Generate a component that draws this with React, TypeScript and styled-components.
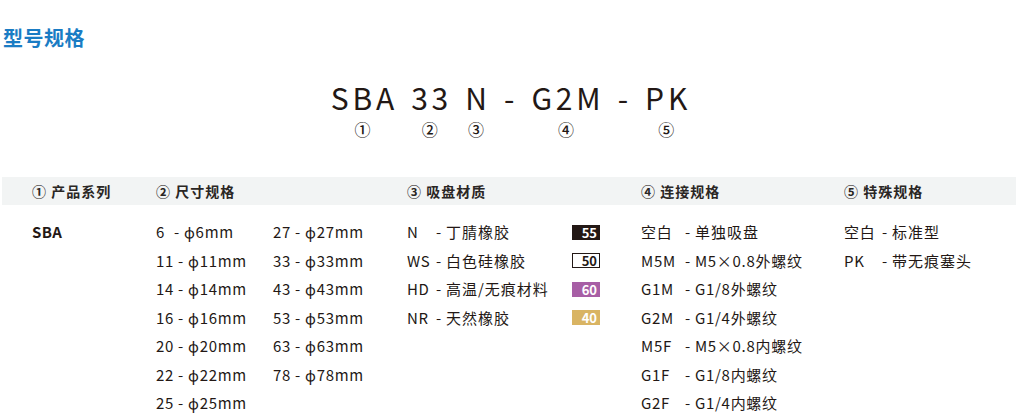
import React from 'react'
import styled, { createGlobalStyle } from 'styled-components'

const GlobalStyle = createGlobalStyle`
  body {
    margin: 0;
    background: #ffffff;
    font-family: 'Noto Sans CJK SC', 'Noto Sans', sans-serif;
    color: #231815;
  }
`

const Page = styled.div`
  width: 1017px;
  padding-top: 24px;
`

const Title = styled.h2`
  margin: 0 0 0 3px;
  font-size: 20px;
  line-height: 28px;
  font-weight: 700;
  color: #1a7cc4;
  letter-spacing: 0.5px;
`

const Model = styled.div`
  display: flex;
  justify-content: center;
  gap: 17px;
  margin-top: 28px;
  padding-left: 1px;
`

const Segment = styled.div`
  display: flex;
  flex-direction: column;
  align-items: center;
`

const Part = styled.span`
  font-size: 30px;
  line-height: 34px;
  letter-spacing: 3.8px;
  margin-right: -3.8px;
  color: #231815;
`

const Mark = styled.span`
  margin-top: 6px;
  font-size: 16px;
  line-height: 19px;
  height: 19px;
  font-weight: 500;
`

const Columns = styled.div`
  display: grid;
  grid-template-columns: 124px 251px 234px 203px 1fr;
  padding-left: 30px;
`

const Band = styled(Columns)`
  margin: 38px 1px 0 2px;
  height: 28px;
  align-items: center;
  background: #f2f4f4;
`

const Head = styled.div`
  font-size: 14px;
  font-weight: 700;
  letter-spacing: 1px;
  color: #2a2624;
  white-space: nowrap;
`

const Body = styled(Columns)`
  margin-left: 2px;
  padding-top: 13px;
`

const List = styled.div`
  display: flex;
  flex-direction: column;
`

const SizeGrid = styled.div`
  display: grid;
  grid-template-columns: 117px 117px;
  grid-auto-flow: column;
  grid-template-rows: repeat(7, 28.5px);
`

const Row = styled.div`
  height: 28.5px;
  line-height: 28.5px;
  font-size: 15px;
  letter-spacing: 0.7px;
  white-space: pre;
`

const MaterialRow = styled(Row)`
  display: flex;
  align-items: center;
  justify-content: space-between;
  width: 193px;
`

const Series = styled(Row)`
  font-weight: 700;
  letter-spacing: 0.3px;
`

const Code = styled.span<{ $w?: number }>`
  display: inline-block;
  ${p => (p.$w ? `width: ${p.$w}px;` : '')}
`

const Desc = styled.span`
  letter-spacing: 1px;
`

const badgeColors: Record<string, { bg: string; fg: string; line: string }> = {
  '55': { bg: '#231815', fg: '#ffffff', line: '#231815' },
  '50': { bg: '#ffffff', fg: '#231815', line: '#231815' },
  '60': { bg: '#a75ea5', fg: '#ffffff', line: '#a75ea5' },
  '40': { bg: '#d9b463', fg: '#ffffff', line: '#d9b463' }
}

const Badge = styled.span<{ $v: string }>`
  box-sizing: border-box;
  width: 28px;
  height: 15px;
  padding-right: 2px;
  text-align: right;
  font-size: 13px;
  line-height: 13px;
  font-weight: 700;
  letter-spacing: 0;
  background: ${p => badgeColors[p.$v].bg};
  color: ${p => badgeColors[p.$v].fg};
  border: 1px solid ${p => badgeColors[p.$v].line};
`

const model = [
  { t: 'SBA', m: '①' },
  { t: '33', m: '②' },
  { t: 'N', m: '③' },
  { t: '-', m: '' },
  { t: 'G2M', m: '④' },
  { t: '-', m: '' },
  { t: 'PK', m: '⑤' }
]

const sizes = ['6', '11', '14', '16', '20', '22', '25', '27', '33', '43', '53', '63', '78']

const materials = [
  { c: 'N', d: '丁腈橡胶', b: '55' },
  { c: 'WS', d: '白色硅橡胶', b: '50' },
  { c: 'HD', d: '高温/无痕材料', b: '60' },
  { c: 'NR', d: '天然橡胶', b: '40' }
]

const ports = [
  ['空白', '单独吸盘'],
  ['M5M', 'M5×0.8外螺纹'],
  ['G1M', 'G1/8外螺纹'],
  ['G2M', 'G1/4外螺纹'],
  ['M5F', 'M5×0.8内螺纹'],
  ['G1F', 'G1/8内螺纹'],
  ['G2F', 'G1/4内螺纹']
]

const specials = [
  ['空白', '标准型'],
  ['PK', '带无痕塞头']
]

const App: React.FC = () => {
  return (
    <Page>
      <GlobalStyle />
      <Title>型号规格</Title>
      <Model>
        {model.map((s, i) => (
          <Segment key={i}>
            <Part>{s.t}</Part>
            <Mark>{s.m}</Mark>
          </Segment>
        ))}
      </Model>
      <Band>
        <Head>① 产品系列</Head>
        <Head>② 尺寸规格</Head>
        <Head>③ 吸盘材质</Head>
        <Head>④ 连接规格</Head>
        <Head>⑤ 特殊规格</Head>
      </Band>
      <Body>
        <List>
          <Series>SBA</Series>
        </List>
        <SizeGrid>
          {sizes.map(c => (
            <Row key={c}>
              <Code $w={c.length === 1 ? 14 : undefined}>{c}</Code>
              {' - ϕ' + c + 'mm'}
            </Row>
          ))}
        </SizeGrid>
        <List>
          {materials.map(m => (
            <MaterialRow key={m.c}>
              <span>
                <Code $w={29}>{m.c}</Code>
                {'- '}
                <Desc>{m.d}</Desc>
              </span>
              <Badge $v={m.b}>{m.b}</Badge>
            </MaterialRow>
          ))}
        </List>
        <List>
          {ports.map(([c, d]) => (
            <Row key={c}>
              <Code $w={44}>{c}</Code>
              {'- '}
              {/^[A-Z]/.test(d) ? d : <Desc>{d}</Desc>}
            </Row>
          ))}
        </List>
        <List>
          {specials.map(([c, d]) => (
            <Row key={c}>
              <Code $w={38}>{c}</Code>
              {'- '}
              <Desc>{d}</Desc>
            </Row>
          ))}
        </List>
      </Body>
    </Page>
  )
}

export default App
